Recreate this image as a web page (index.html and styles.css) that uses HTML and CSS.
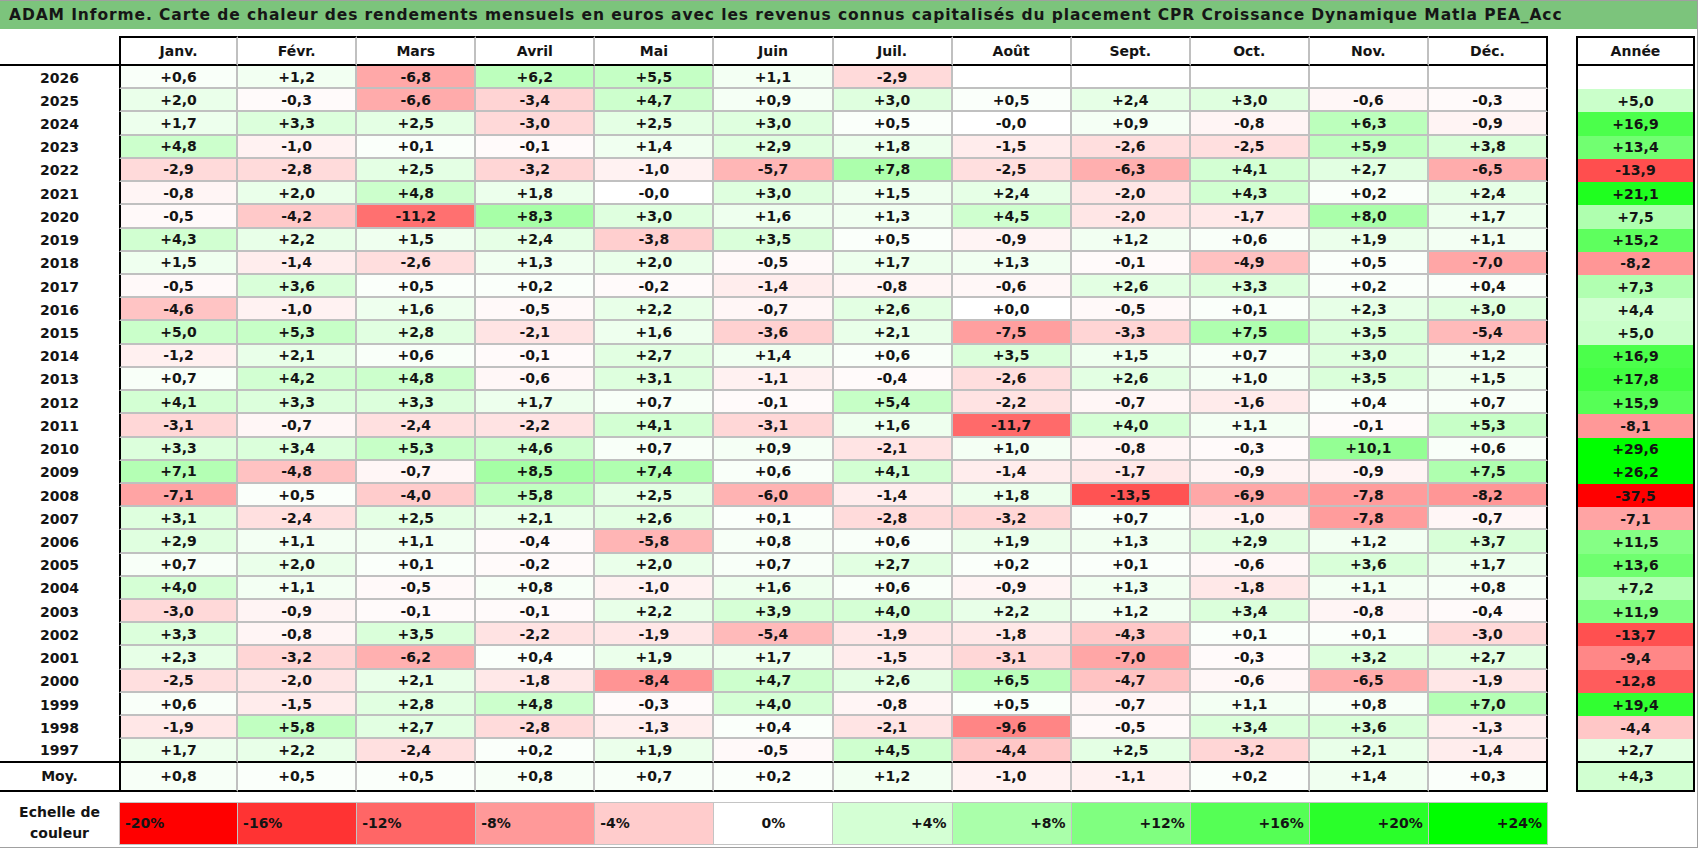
FILE: index.html
```html
<!DOCTYPE html>
<html lang="fr">
<head>
<meta charset="utf-8">
<title>ADAM Informe</title>
<link rel="stylesheet" href="styles.css">
</head>
<body>
<div class="sheet">
  <div class="title">ADAM Informe. Carte de chaleur des rendements mensuels en euros avec les revenus connus capitalisés du placement CPR Croissance Dynamique Matla PEA_Acc</div>
  <div class="grid">
    <div class="r hd"><div class="y"></div><div class="c">Janv.</div><div class="c">Févr.</div><div class="c">Mars</div><div class="c">Avril</div><div class="c">Mai</div><div class="c">Juin</div><div class="c">Juil.</div><div class="c">Août</div><div class="c">Sept.</div><div class="c">Oct.</div><div class="c">Nov.</div><div class="c">Déc.</div><div class="s"></div><div class="a">Année</div></div>
    <div class="r"><div class="y">2026</div><div class="c">+0,6</div><div class="c">+1,2</div><div class="c">-6,8</div><div class="c">+6,2</div><div class="c">+5,5</div><div class="c">+1,1</div><div class="c">-2,9</div><div class="c"></div><div class="c"></div><div class="c"></div><div class="c"></div><div class="c"></div><div class="s"></div><div class="a"></div></div>
    <div class="r"><div class="y">2025</div><div class="c">+2,0</div><div class="c">-0,3</div><div class="c">-6,6</div><div class="c">-3,4</div><div class="c">+4,7</div><div class="c">+0,9</div><div class="c">+3,0</div><div class="c">+0,5</div><div class="c">+2,4</div><div class="c">+3,0</div><div class="c">-0,6</div><div class="c">-0,3</div><div class="s"></div><div class="a">+5,0</div></div>
    <div class="r"><div class="y">2024</div><div class="c">+1,7</div><div class="c">+3,3</div><div class="c">+2,5</div><div class="c">-3,0</div><div class="c">+2,5</div><div class="c">+3,0</div><div class="c">+0,5</div><div class="c">-0,0</div><div class="c">+0,9</div><div class="c">-0,8</div><div class="c">+6,3</div><div class="c">-0,9</div><div class="s"></div><div class="a">+16,9</div></div>
    <div class="r"><div class="y">2023</div><div class="c">+4,8</div><div class="c">-1,0</div><div class="c">+0,1</div><div class="c">-0,1</div><div class="c">+1,4</div><div class="c">+2,9</div><div class="c">+1,8</div><div class="c">-1,5</div><div class="c">-2,6</div><div class="c">-2,5</div><div class="c">+5,9</div><div class="c">+3,8</div><div class="s"></div><div class="a">+13,4</div></div>
    <div class="r"><div class="y">2022</div><div class="c">-2,9</div><div class="c">-2,8</div><div class="c">+2,5</div><div class="c">-3,2</div><div class="c">-1,0</div><div class="c">-5,7</div><div class="c">+7,8</div><div class="c">-2,5</div><div class="c">-6,3</div><div class="c">+4,1</div><div class="c">+2,7</div><div class="c">-6,5</div><div class="s"></div><div class="a">-13,9</div></div>
    <div class="r"><div class="y">2021</div><div class="c">-0,8</div><div class="c">+2,0</div><div class="c">+4,8</div><div class="c">+1,8</div><div class="c">-0,0</div><div class="c">+3,0</div><div class="c">+1,5</div><div class="c">+2,4</div><div class="c">-2,0</div><div class="c">+4,3</div><div class="c">+0,2</div><div class="c">+2,4</div><div class="s"></div><div class="a">+21,1</div></div>
    <div class="r"><div class="y">2020</div><div class="c">-0,5</div><div class="c">-4,2</div><div class="c">-11,2</div><div class="c">+8,3</div><div class="c">+3,0</div><div class="c">+1,6</div><div class="c">+1,3</div><div class="c">+4,5</div><div class="c">-2,0</div><div class="c">-1,7</div><div class="c">+8,0</div><div class="c">+1,7</div><div class="s"></div><div class="a">+7,5</div></div>
    <div class="r"><div class="y">2019</div><div class="c">+4,3</div><div class="c">+2,2</div><div class="c">+1,5</div><div class="c">+2,4</div><div class="c">-3,8</div><div class="c">+3,5</div><div class="c">+0,5</div><div class="c">-0,9</div><div class="c">+1,2</div><div class="c">+0,6</div><div class="c">+1,9</div><div class="c">+1,1</div><div class="s"></div><div class="a">+15,2</div></div>
    <div class="r"><div class="y">2018</div><div class="c">+1,5</div><div class="c">-1,4</div><div class="c">-2,6</div><div class="c">+1,3</div><div class="c">+2,0</div><div class="c">-0,5</div><div class="c">+1,7</div><div class="c">+1,3</div><div class="c">-0,1</div><div class="c">-4,9</div><div class="c">+0,5</div><div class="c">-7,0</div><div class="s"></div><div class="a">-8,2</div></div>
    <div class="r"><div class="y">2017</div><div class="c">-0,5</div><div class="c">+3,6</div><div class="c">+0,5</div><div class="c">+0,2</div><div class="c">-0,2</div><div class="c">-1,4</div><div class="c">-0,8</div><div class="c">-0,6</div><div class="c">+2,6</div><div class="c">+3,3</div><div class="c">+0,2</div><div class="c">+0,4</div><div class="s"></div><div class="a">+7,3</div></div>
    <div class="r"><div class="y">2016</div><div class="c">-4,6</div><div class="c">-1,0</div><div class="c">+1,6</div><div class="c">-0,5</div><div class="c">+2,2</div><div class="c">-0,7</div><div class="c">+2,6</div><div class="c">+0,0</div><div class="c">-0,5</div><div class="c">+0,1</div><div class="c">+2,3</div><div class="c">+3,0</div><div class="s"></div><div class="a">+4,4</div></div>
    <div class="r"><div class="y">2015</div><div class="c">+5,0</div><div class="c">+5,3</div><div class="c">+2,8</div><div class="c">-2,1</div><div class="c">+1,6</div><div class="c">-3,6</div><div class="c">+2,1</div><div class="c">-7,5</div><div class="c">-3,3</div><div class="c">+7,5</div><div class="c">+3,5</div><div class="c">-5,4</div><div class="s"></div><div class="a">+5,0</div></div>
    <div class="r"><div class="y">2014</div><div class="c">-1,2</div><div class="c">+2,1</div><div class="c">+0,6</div><div class="c">-0,1</div><div class="c">+2,7</div><div class="c">+1,4</div><div class="c">+0,6</div><div class="c">+3,5</div><div class="c">+1,5</div><div class="c">+0,7</div><div class="c">+3,0</div><div class="c">+1,2</div><div class="s"></div><div class="a">+16,9</div></div>
    <div class="r"><div class="y">2013</div><div class="c">+0,7</div><div class="c">+4,2</div><div class="c">+4,8</div><div class="c">-0,6</div><div class="c">+3,1</div><div class="c">-1,1</div><div class="c">-0,4</div><div class="c">-2,6</div><div class="c">+2,6</div><div class="c">+1,0</div><div class="c">+3,5</div><div class="c">+1,5</div><div class="s"></div><div class="a">+17,8</div></div>
    <div class="r"><div class="y">2012</div><div class="c">+4,1</div><div class="c">+3,3</div><div class="c">+3,3</div><div class="c">+1,7</div><div class="c">+0,7</div><div class="c">-0,1</div><div class="c">+5,4</div><div class="c">-2,2</div><div class="c">-0,7</div><div class="c">-1,6</div><div class="c">+0,4</div><div class="c">+0,7</div><div class="s"></div><div class="a">+15,9</div></div>
    <div class="r"><div class="y">2011</div><div class="c">-3,1</div><div class="c">-0,7</div><div class="c">-2,4</div><div class="c">-2,2</div><div class="c">+4,1</div><div class="c">-3,1</div><div class="c">+1,6</div><div class="c">-11,7</div><div class="c">+4,0</div><div class="c">+1,1</div><div class="c">-0,1</div><div class="c">+5,3</div><div class="s"></div><div class="a">-8,1</div></div>
    <div class="r"><div class="y">2010</div><div class="c">+3,3</div><div class="c">+3,4</div><div class="c">+5,3</div><div class="c">+4,6</div><div class="c">+0,7</div><div class="c">+0,9</div><div class="c">-2,1</div><div class="c">+1,0</div><div class="c">-0,8</div><div class="c">-0,3</div><div class="c">+10,1</div><div class="c">+0,6</div><div class="s"></div><div class="a">+29,6</div></div>
    <div class="r"><div class="y">2009</div><div class="c">+7,1</div><div class="c">-4,8</div><div class="c">-0,7</div><div class="c">+8,5</div><div class="c">+7,4</div><div class="c">+0,6</div><div class="c">+4,1</div><div class="c">-1,4</div><div class="c">-1,7</div><div class="c">-0,9</div><div class="c">-0,9</div><div class="c">+7,5</div><div class="s"></div><div class="a">+26,2</div></div>
    <div class="r"><div class="y">2008</div><div class="c">-7,1</div><div class="c">+0,5</div><div class="c">-4,0</div><div class="c">+5,8</div><div class="c">+2,5</div><div class="c">-6,0</div><div class="c">-1,4</div><div class="c">+1,8</div><div class="c">-13,5</div><div class="c">-6,9</div><div class="c">-7,8</div><div class="c">-8,2</div><div class="s"></div><div class="a">-37,5</div></div>
    <div class="r"><div class="y">2007</div><div class="c">+3,1</div><div class="c">-2,4</div><div class="c">+2,5</div><div class="c">+2,1</div><div class="c">+2,6</div><div class="c">+0,1</div><div class="c">-2,8</div><div class="c">-3,2</div><div class="c">+0,7</div><div class="c">-1,0</div><div class="c">-7,8</div><div class="c">-0,7</div><div class="s"></div><div class="a">-7,1</div></div>
    <div class="r"><div class="y">2006</div><div class="c">+2,9</div><div class="c">+1,1</div><div class="c">+1,1</div><div class="c">-0,4</div><div class="c">-5,8</div><div class="c">+0,8</div><div class="c">+0,6</div><div class="c">+1,9</div><div class="c">+1,3</div><div class="c">+2,9</div><div class="c">+1,2</div><div class="c">+3,7</div><div class="s"></div><div class="a">+11,5</div></div>
    <div class="r"><div class="y">2005</div><div class="c">+0,7</div><div class="c">+2,0</div><div class="c">+0,1</div><div class="c">-0,2</div><div class="c">+2,0</div><div class="c">+0,7</div><div class="c">+2,7</div><div class="c">+0,2</div><div class="c">+0,1</div><div class="c">-0,6</div><div class="c">+3,6</div><div class="c">+1,7</div><div class="s"></div><div class="a">+13,6</div></div>
    <div class="r"><div class="y">2004</div><div class="c">+4,0</div><div class="c">+1,1</div><div class="c">-0,5</div><div class="c">+0,8</div><div class="c">-1,0</div><div class="c">+1,6</div><div class="c">+0,6</div><div class="c">-0,9</div><div class="c">+1,3</div><div class="c">-1,8</div><div class="c">+1,1</div><div class="c">+0,8</div><div class="s"></div><div class="a">+7,2</div></div>
    <div class="r"><div class="y">2003</div><div class="c">-3,0</div><div class="c">-0,9</div><div class="c">-0,1</div><div class="c">-0,1</div><div class="c">+2,2</div><div class="c">+3,9</div><div class="c">+4,0</div><div class="c">+2,2</div><div class="c">+1,2</div><div class="c">+3,4</div><div class="c">-0,8</div><div class="c">-0,4</div><div class="s"></div><div class="a">+11,9</div></div>
    <div class="r"><div class="y">2002</div><div class="c">+3,3</div><div class="c">-0,8</div><div class="c">+3,5</div><div class="c">-2,2</div><div class="c">-1,9</div><div class="c">-5,4</div><div class="c">-1,9</div><div class="c">-1,8</div><div class="c">-4,3</div><div class="c">+0,1</div><div class="c">+0,1</div><div class="c">-3,0</div><div class="s"></div><div class="a">-13,7</div></div>
    <div class="r"><div class="y">2001</div><div class="c">+2,3</div><div class="c">-3,2</div><div class="c">-6,2</div><div class="c">+0,4</div><div class="c">+1,9</div><div class="c">+1,7</div><div class="c">-1,5</div><div class="c">-3,1</div><div class="c">-7,0</div><div class="c">-0,3</div><div class="c">+3,2</div><div class="c">+2,7</div><div class="s"></div><div class="a">-9,4</div></div>
    <div class="r"><div class="y">2000</div><div class="c">-2,5</div><div class="c">-2,0</div><div class="c">+2,1</div><div class="c">-1,8</div><div class="c">-8,4</div><div class="c">+4,7</div><div class="c">+2,6</div><div class="c">+6,5</div><div class="c">-4,7</div><div class="c">-0,6</div><div class="c">-6,5</div><div class="c">-1,9</div><div class="s"></div><div class="a">-12,8</div></div>
    <div class="r"><div class="y">1999</div><div class="c">+0,6</div><div class="c">-1,5</div><div class="c">+2,8</div><div class="c">+4,8</div><div class="c">-0,3</div><div class="c">+4,0</div><div class="c">-0,8</div><div class="c">+0,5</div><div class="c">-0,7</div><div class="c">+1,1</div><div class="c">+0,8</div><div class="c">+7,0</div><div class="s"></div><div class="a">+19,4</div></div>
    <div class="r"><div class="y">1998</div><div class="c">-1,9</div><div class="c">+5,8</div><div class="c">+2,7</div><div class="c">-2,8</div><div class="c">-1,3</div><div class="c">+0,4</div><div class="c">-2,1</div><div class="c">-9,6</div><div class="c">-0,5</div><div class="c">+3,4</div><div class="c">+3,6</div><div class="c">-1,3</div><div class="s"></div><div class="a">-4,4</div></div>
    <div class="r end"><div class="y">1997</div><div class="c">+1,7</div><div class="c">+2,2</div><div class="c">-2,4</div><div class="c">+0,2</div><div class="c">+1,9</div><div class="c">-0,5</div><div class="c">+4,5</div><div class="c">-4,4</div><div class="c">+2,5</div><div class="c">-3,2</div><div class="c">+2,1</div><div class="c">-1,4</div><div class="s"></div><div class="a">+2,7</div></div>
    <div class="r end moy"><div class="y">Moy.</div><div class="c">+0,8</div><div class="c">+0,5</div><div class="c">+0,5</div><div class="c">+0,8</div><div class="c">+0,7</div><div class="c">+0,2</div><div class="c">+1,2</div><div class="c">-1,0</div><div class="c">-1,1</div><div class="c">+0,2</div><div class="c">+1,4</div><div class="c">+0,3</div><div class="s"></div><div class="a">+4,3</div></div>
  </div>
  <div class="scale">
    <div class="lab">Echelle de<br>couleur</div>
    <div class="k neg n20">-20%</div>
    <div class="k neg n16">-16%</div>
    <div class="k neg n12">-12%</div>
    <div class="k neg n8">-8%</div>
    <div class="k neg n4">-4%</div>
    <div class="k zero">0%</div>
    <div class="k pos p4">+4%</div>
    <div class="k pos p8">+8%</div>
    <div class="k pos p12">+12%</div>
    <div class="k pos p16">+16%</div>
    <div class="k pos p20">+20%</div>
    <div class="k pos p24">+24%</div>
  </div>
</div>
<script src="script.js"></script>
</body>
</html>
```

FILE: styles.css
```css
html, body {
  margin: 0;
  padding: 0;
  background: #ffffff;
}

.sheet {
  width: 1698px;
  height: 848px;
  box-sizing: border-box;
  border-top: 1px solid #a0a0a0;
  border-right: 1px solid #a0a0a0;
  border-bottom: 1px solid #a0a0a0;
  font-family: "DejaVu Sans", "Liberation Sans", sans-serif;
  font-weight: bold;
  font-size: 14px;
  color: #141414;
  overflow: hidden;
}

.title {
  height: 28px;
  line-height: 28px;
  background: #7cc47c;
  padding-left: 9px;
  font-size: 15.5px;
  letter-spacing: 0.9px;
  white-space: nowrap;
  color: #161616;
}

.grid {
  margin-top: 7px;
  width: 1695px;
  display: grid;
  grid-template-columns: 119px repeat(12, 1fr) 28px 119px;
  grid-template-rows: 30px repeat(30, 23.233px) 29px;
}

.r {
  display: contents;
}

.r > div {
  box-sizing: border-box;
  display: flex;
  align-items: center;
  justify-content: center;
  white-space: nowrap;
}

.c {
  border-right: 2px solid #c0c0c0;
  border-bottom: 2px solid #c0c0c0;
}

.r > .c:nth-child(2) {
  border-left: 2px solid #000;
}

.r > .c:nth-child(13) {
  border-right: 2px solid #000;
}

.a {
  border-left: 2px solid #000;
  border-right: 2px solid #000;
}

.hd > .y {
  border-bottom: 2px solid #000;
}

.hd > .c {
  border-top: 2px solid #000;
  border-bottom: 2px solid #000;
}

.hd > .a {
  border-top: 2px solid #000;
  border-bottom: 2px solid #000;
}

.end > .y,
.end > .c,
.end > .a {
  border-bottom: 2px solid #000;
}

.scale {
  margin-top: 10px;
  height: 43px;
  display: grid;
  grid-template-columns: 119px repeat(12, 119.083px);
}

.lab {
  display: flex;
  align-items: center;
  justify-content: center;
  text-align: center;
  line-height: 21px;
}

.k {
  display: flex;
  align-items: center;
  border-top: 1px solid #c4c4c4;
  border-bottom: 1px solid #c4c4c4;
  border-right: 1px solid #c4c4c4;
  box-sizing: border-box;
  padding: 0 5px;
}

.k.n20 {
  border-left: 1px solid #c4c4c4;
}

.neg { justify-content: flex-start; }
.zero { justify-content: center; }
.pos { justify-content: flex-end; }

.n20 { background: #ff0000; }
.n16 { background: #ff3333; }
.n12 { background: #ff6666; }
.n8 { background: #ff9999; }
.n4 { background: #ffcccc; }
.zero { background: #ffffff; }
.p4 { background: #d4ffd4; }
.p8 { background: #aaffaa; }
.p12 { background: #80ff80; }
.p16 { background: #55ff55; }
.p20 { background: #2aff2a; }
.p24 { background: #00ff00; }
```

FILE: script.js
```js
(function () {
  var cells = document.querySelectorAll('.grid .r:not(.hd) .c, .grid .r:not(.hd) .a');
  for (var i = 0; i < cells.length; i++) {
    var el = cells[i];
    var t = el.textContent.trim();
    if (!t) continue;
    var v = parseFloat(t.replace(',', '.'));
    if (isNaN(v)) continue;
    var k;
    if (v < 0) {
      k = Math.round(255 * (1 - Math.min(-v / 20, 1)));
      if (v !== 0 && k > 250) k = 250;
      el.style.backgroundColor = 'rgb(255,' + k + ',' + k + ')';
    } else {
      k = Math.round(255 * (1 - Math.min(v / 24, 1)));
      if (v !== 0 && k > 250) k = 250;
      el.style.backgroundColor = 'rgb(' + k + ',255,' + k + ')';
    }
  }
})();
```
